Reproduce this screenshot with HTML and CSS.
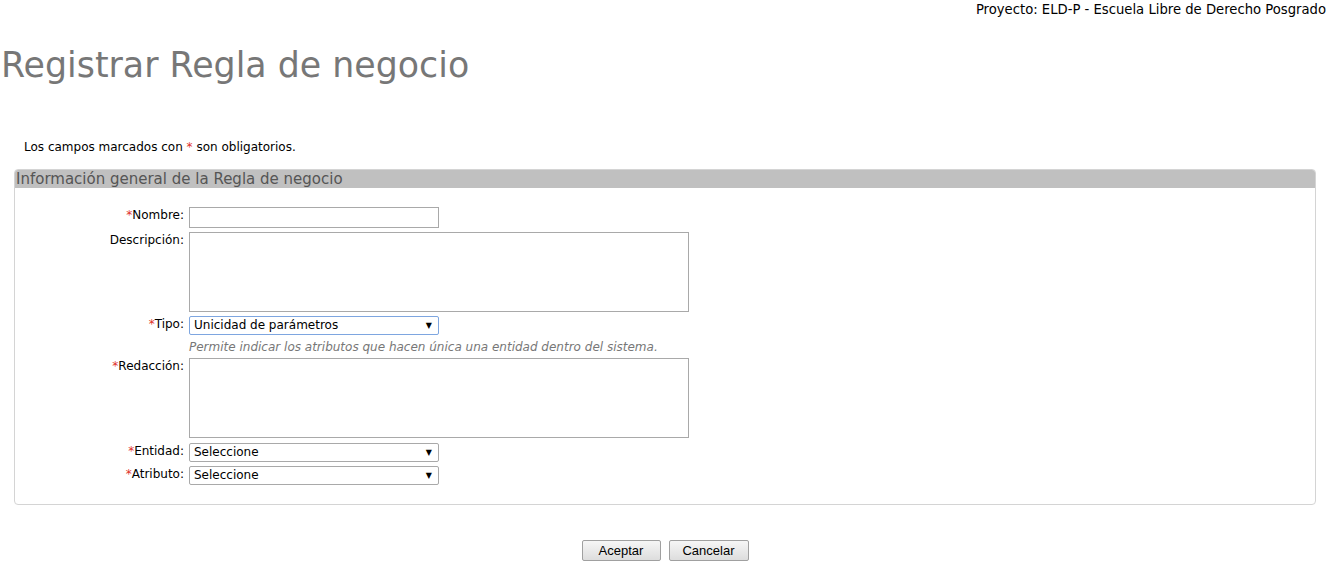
FILE: index.html
```html
<!DOCTYPE html>
<html lang="es">
<head>
<meta charset="utf-8">
<title>Registrar Regla de negocio</title>
<link rel="stylesheet" href="styles.css">
</head>
<body>
<div class="topbar">Proyecto: ELD-P - Escuela Libre de Derecho Posgrado</div>
<h1 class="title">Registrar Regla de negocio</h1>
<p class="note">Los campos marcados con <span class="req">*</span> son obligatorios.</p>
<div class="panel">
  <div class="panel-head">Información general de la Regla de negocio</div>
  <div class="form">
    <label class="lbl"><span class="req">*</span>Nombre:</label>
    <div class="field"><input class="input" type="text"></div>

    <label class="lbl">Descripción:</label>
    <div class="field"><textarea class="area"></textarea></div>

    <label class="lbl lbl-sel"><span class="req">*</span>Tipo:</label>
    <div class="field">
      <div class="select focus"><span>Unicidad de parámetros</span></div>
      <div class="help">Permite indicar los atributos que hacen única una entidad dentro del sistema.</div>
    </div>

    <label class="lbl"><span class="req">*</span>Redacción:</label>
    <div class="field field-gap"><textarea class="area"></textarea></div>

    <label class="lbl lbl-sel"><span class="req">*</span>Entidad:</label>
    <div class="field"><div class="select"><span>Seleccione</span></div></div>

    <label class="lbl lbl-sel"><span class="req">*</span>Atributo:</label>
    <div class="field"><div class="select"><span>Seleccione</span></div></div>
  </div>
</div>
<div class="actions">
  <button class="btn" type="button">Aceptar</button>
  <button class="btn" type="button">Cancelar</button>
</div>
</body>
</html>
```

FILE: styles.css
```css
html, body {
  margin: 0;
  padding: 0;
  background: #fff;
}
body {
  font-family: "DejaVu Sans", Verdana, sans-serif;
  font-size: 12px;
  color: #000;
}
.topbar {
  text-align: right;
  padding: 2px 4px 0 0;
  height: 18px;
  font-size: 13.2px;
  line-height: 16px;
}
.title {
  margin: 24px 0 0 1px;
  font-size: 34.8px;
  font-weight: normal;
  color: #777;
  line-height: 42px;
}
.note {
  margin: 54px 0 0 24px;
  font-size: 12px;
  line-height: 14px;
}
.req {
  color: #e0302a;
}
.panel {
  margin: 15px 14px 0 14px;
  border: 1px solid #d4d4d4;
  border-radius: 4px;
  height: 336px;
  box-sizing: border-box;
}
.panel-head {
  background: #c0c0c0;
  color: #555;
  font-size: 15px;
  line-height: 18px;
  padding: 0 0 0 1px;
  border-radius: 3px 3px 0 0;
}
.form {
  display: grid;
  grid-template-columns: 169px 1fr;
  column-gap: 5px;
  row-gap: 4px;
  padding-top: 19px;
}
.lbl {
  text-align: right;
  font-size: 12px;
  line-height: 14px;
  padding-top: 1px;
  color: #000;
}
.field {
  display: flex;
  flex-direction: column;
}
.field-gap {
  padding-bottom: 1px;
}
.input {
  width: 250px;
  height: 21px;
  box-sizing: border-box;
  border: 1px solid #a9a9a9;
  margin: 0;
  padding: 1px 2px;
  font: inherit;
}
.area {
  width: 500px;
  height: 80px;
  box-sizing: border-box;
  border: 1px solid #a9a9a9;
  margin: 0;
  padding: 2px;
  resize: none;
  font: inherit;
}
.select {
  position: relative;
  width: 250px;
  height: 19px;
  box-sizing: border-box;
  border: 1px solid #a9a9a9;
  border-radius: 2px;
  padding: 0 0 0 4px;
  font-size: 12px;
  line-height: 17px;
  color: #000;
  background: #fff;
}
.select.focus {
  border-color: #7ea6e0;
}
.select::after {
  content: "▼";
  position: absolute;
  right: 6px;
  top: 0;
  font-size: 8px;
  line-height: 17px;
}
.help {
  margin-top: 5px;
  font-style: italic;
  color: #777;
  font-size: 12px;
  line-height: 14px;
}
.actions {
  display: flex;
  justify-content: center;
  gap: 8px;
  margin-top: 35px;
  padding-left: 0;
}
.btn {
  font-family: "Liberation Sans", Arial, sans-serif;
  font-size: 13px;
  height: 21px;
  width: 79px;
  padding: 0;
  background: linear-gradient(#f6f6f6, #dddddd);
  border: 1px solid #a0a0a0;
  border-radius: 2px;
  color: #000;
}
.btn + .btn {
  width: 80px;
}
```
